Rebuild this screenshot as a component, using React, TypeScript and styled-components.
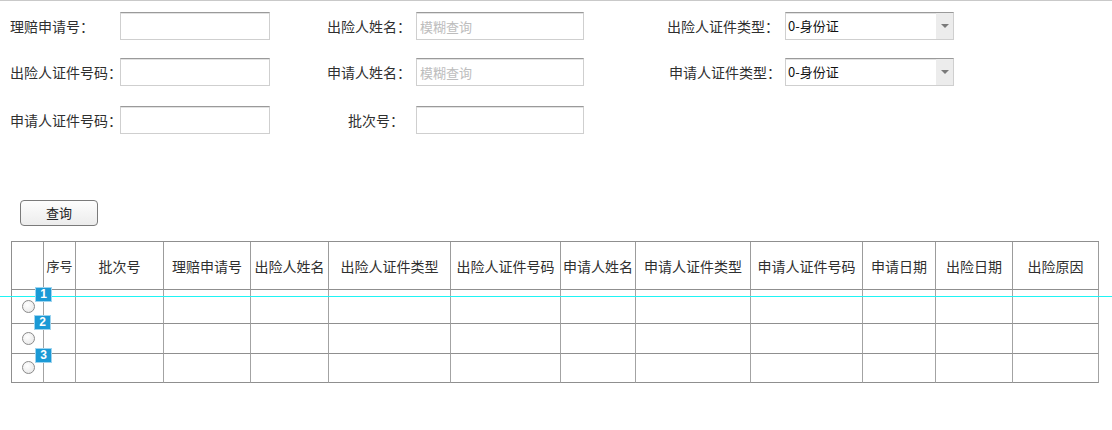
import React from "react";
import styled, { createGlobalStyle } from "styled-components";

const GlobalStyle = createGlobalStyle`
  html, body { margin: 0; padding: 0; background: #fff; }
  body { font-family: "Noto Sans CJK SC", "Microsoft YaHei", sans-serif; color: #333; }
  * { box-sizing: border-box; }
`;

const Page = styled.div`
  position: relative;
  width: 1112px;
  height: 430px;
  border-top: 1px solid #c9c9c9;
  overflow: hidden;
`;

const Form = styled.div`
  display: flex;
  flex-direction: column;
  padding: 11px 0 0 10px;
`;

const FormRow = styled.div<{ $mt?: number }>`
  display: grid;
  grid-template-columns: 110px 150px 146px 168px 201px 169px;
  align-items: center;
  height: 28px;
  margin-top: ${(p) => p.$mt ?? 0}px;
`;

const Label = styled.label<{ $right?: boolean; $pr?: number }>`
  font-size: 14px;
  line-height: 28px;
  color: #2f2f2f;
  white-space: nowrap;
  text-align: ${(p) => (p.$right ? "right" : "left")};
  padding-right: ${(p) => p.$pr ?? 0}px;
`;

const TextInput = styled.input`
  width: 100%;
  height: 28px;
  margin: 0;
  padding: 0 3px;
  border: 1px solid #cfcfcf;
  border-top-color: #9a9a9a;
  box-shadow: inset 0 1px 0 #e2e2e2;
  font-family: "Noto Sans CJK SC", sans-serif;
  font-size: 13px;
  color: #333;
  outline: none;
  background: #fff;
  &::placeholder { color: #bdbdbd; }
`;

const Combo = styled.div`
  display: flex;
  align-items: stretch;
  height: 28px;
  border: 1px solid #cfcfcf;
  border-top-color: #9a9a9a;
  box-shadow: inset 0 1px 0 #e2e2e2;
  background: #fff;
`;

const ComboValue = styled.span`
  flex: 1;
  font-size: 13px;
  line-height: 26px;
  color: #111;
  padding-left: 2px;
`;

const ComboArrow = styled.span`
  width: 17px;
  display: flex;
  align-items: center;
  justify-content: center;
  background: #ececec;
  &::after {
    content: "";
    width: 0;
    height: 0;
    border-left: 4px solid transparent;
    border-right: 4px solid transparent;
    border-top: 4px solid #7a7a7a;
  }
`;

const ButtonBar = styled.div`
  padding: 65px 0 0 20px;
`;

const Button = styled.button`
  width: 78px;
  height: 26px;
  padding: 0;
  border: 1px solid #7a7a7a;
  border-radius: 4px;
  background: linear-gradient(#fdfdfd, #ececec);
  font-family: "Noto Sans CJK SC", sans-serif;
  font-size: 13px;
  color: #222;
  line-height: 24px;
`;

const cols = [32, 32, 88, 87, 78, 122, 110, 75, 115, 112, 73, 77, 86];

const Grid = styled.div`
  display: grid;
  grid-template-columns: ${cols.map((c) => c + "px").join(" ")};
  grid-template-rows: 48px 34px 30px 29px;
  width: ${cols.reduce((a, b) => a + b, 0) + 1}px;
  margin: 15px 0 0 11px;
  border-left: 1px solid #8f8f8f;
  border-top: 1px solid #8f8f8f;
`;

const HeadCell = styled.div<{ $small?: boolean }>`
  display: flex;
  align-items: center;
  justify-content: center;
  border-right: 1px solid #9c9c9c;
  border-bottom: 1px solid #8f8f8f;
  font-size: ${(p) => (p.$small ? 13 : 14)}px;
  color: #2f2f2f;
  white-space: nowrap;
  overflow: hidden;
`;

const Cell = styled.div`
  border-right: 1px solid #a3a3a3;
  border-bottom: 1px solid #8f8f8f;
`;

const RadioCell = styled(Cell)`
  position: relative;
  display: flex;
  align-items: center;
  justify-content: flex-start;
  padding-left: 10px;
`;

const Radio = styled.span<{ $dy: number }>`
  width: 13px;
  height: 13px;
  border-radius: 50%;
  border: 1px solid #8a8a8a;
  background: radial-gradient(circle at 40% 35%, #ffffff, #e4e4e4);
  margin-top: ${(p) => p.$dy}px;
`;

const Badge = styled.span<{ $top: number; $left: number }>`
  position: absolute;
  top: ${(p) => p.$top}px;
  left: ${(p) => p.$left}px;
  width: 17px;
  height: 15px;
  background: #1b9ad6;
  border: 1px solid #9ed4ef;
  color: #fff;
  font-family: "Liberation Sans", Arial, sans-serif;
  font-weight: bold;
  font-size: 12px;
  line-height: 13px;
  text-align: center;
  z-index: 5;
`;

const GuideLine = styled.div`
  position: absolute;
  left: 0;
  top: 295px;
  width: 1112px;
  height: 1px;
  background: #1ff4f4;
  z-index: 4;
`;

const headers = [
  "",
  "序号",
  "批次号",
  "理赔申请号",
  "出险人姓名",
  "出险人证件类型",
  "出险人证件号码",
  "申请人姓名",
  "申请人证件类型",
  "申请人证件号码",
  "申请日期",
  "出险日期",
  "出险原因",
];

const rows = [
  { n: 1, dy: -1, top: -3, left: 23 },
  { n: 2, dy: 0, top: -9, left: 22 },
  { n: 3, dy: -2, top: -6, left: 23 },
];

export default function App() {
  return (
    <>
      <GlobalStyle />
      <Page>
        <Form>
          <FormRow>
            <Label>理赔申请号：</Label>
            <TextInput readOnly />
            <Label $right $pr={5}>出险人姓名：</Label>
            <TextInput readOnly placeholder="模糊查询" />
            <Label $right $pr={6}>出险人证件类型：</Label>
            <Combo>
              <ComboValue>0-身份证</ComboValue>
              <ComboArrow />
            </Combo>
          </FormRow>
          <FormRow $mt={18}>
            <Label>出险人证件号码：</Label>
            <TextInput readOnly />
            <Label $right $pr={5}>申请人姓名：</Label>
            <TextInput readOnly placeholder="模糊查询" />
            <Label $right $pr={4}>申请人证件类型：</Label>
            <Combo>
              <ComboValue>0-身份证</ComboValue>
              <ComboArrow />
            </Combo>
          </FormRow>
          <FormRow $mt={20}>
            <Label>申请人证件号码：</Label>
            <TextInput readOnly />
            <Label $right $pr={12}>批次号：</Label>
            <TextInput readOnly />
          </FormRow>
        </Form>
        <ButtonBar>
          <Button type="button">查询</Button>
        </ButtonBar>
        <Grid>
          {headers.map((h, i) => (
            <HeadCell key={i} $small={h === "序号"}>
              {h}
            </HeadCell>
          ))}
          {rows.map((r) => (
            <React.Fragment key={r.n}>
              <RadioCell>
                <Radio $dy={r.dy} />
                <Badge $top={r.top} $left={r.left}>
                  {r.n}
                </Badge>
              </RadioCell>
              {cols.slice(1).map((_, i) => (
                <Cell key={i} />
              ))}
            </React.Fragment>
          ))}
        </Grid>
        <GuideLine />
      </Page>
    </>
  );
}
